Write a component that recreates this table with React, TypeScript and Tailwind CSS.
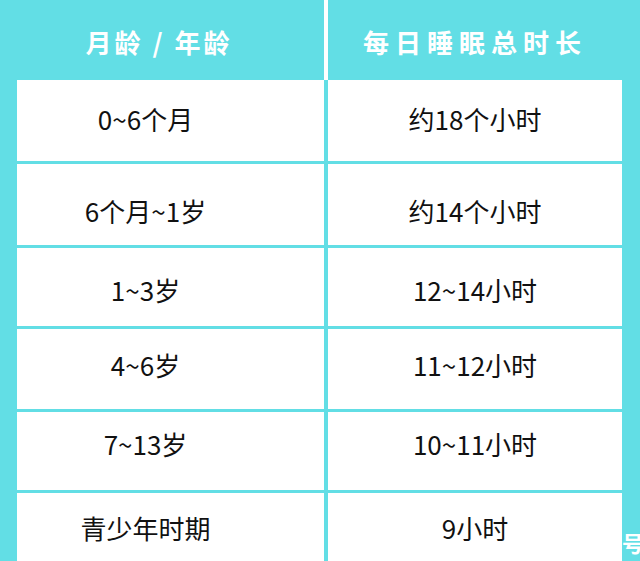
import React from "react";

const rows: { l: string; r: string; h: string; p: string }[] = [
  { l: "0~6个月", r: "约18个小时", h: "h-[81px]", p: "pb-[4px]" },
  { l: "6个月~1岁", r: "约14个小时", h: "h-[81px]", p: "pt-[12px]" },
  { l: "1~3岁", r: "12~14小时", h: "h-[78px]", p: "pt-[6px]" },
  { l: "4~6岁", r: "11~12小时", h: "h-[80px]", p: "pb-[9px]" },
  { l: "7~13岁", r: "10~11小时", h: "h-[78px]", p: "pb-[14px]" },
  { l: "青少年时期", r: "9小时", h: "h-[80px]", p: "pb-[10px]" },
];

export default function App() {
  return (
    <div
      className="relative w-[640px] h-[561px] overflow-hidden bg-[#62dee5]"
      style={{ fontFamily: '"Noto Sans CJK SC", "Noto Sans", sans-serif' }}
    >
      <div className="flex h-[80px]">
        <div className="w-[324px] flex items-center justify-center pr-[6px] pt-[2px] text-white text-[26px] font-bold tracking-[3px]">
          月龄 / 年龄
        </div>
        <div className="w-[4px] bg-white" />
        <div className="w-[294px] flex items-center justify-center pt-[2px] text-white text-[26px] font-bold tracking-[6px]">
          每日睡眠总时长
        </div>
      </div>
      <div className="grid grid-cols-[307px_294px] gap-x-[4px] gap-y-[3px] pl-[17px]">
        {rows.map((row, i) => (
          <React.Fragment key={i}>
            <div
              className={`${row.h} ${row.p} bg-white flex items-center justify-center pr-[50px] text-[26px] font-normal text-[#111] leading-none`}
            >
              {row.l}
            </div>
            <div
              className={`${row.h} ${row.p} bg-white flex items-center justify-center text-[26px] font-normal text-[#111] leading-none`}
            >
              {row.r}
            </div>
          </React.Fragment>
        ))}
      </div>
      <span className="absolute right-[-4px] bottom-[8px] text-white text-[22px] font-bold leading-none">
        号
      </span>
    </div>
  );
}
